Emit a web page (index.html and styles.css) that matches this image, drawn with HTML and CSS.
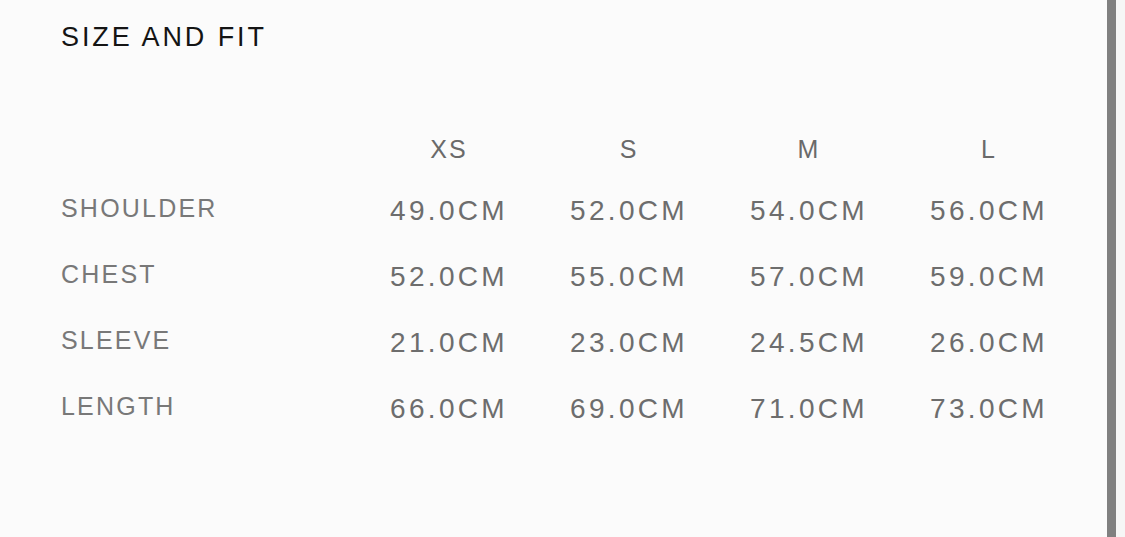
FILE: index.html
```html
<!DOCTYPE html>
<html>
<head>
<meta charset="utf-8">
<link rel="stylesheet" href="styles.css">
</head>
<body>
<div class="page">
  <main class="panel">
    <h1 class="title">SIZE AND FIT</h1>
    <div class="table">
      <div class="head blank"></div>
      <div class="head">XS</div>
      <div class="head">S</div>
      <div class="head">M</div>
      <div class="head">L</div>

      <div class="label">SHOULDER</div>
      <div class="val">49.0CM</div>
      <div class="val">52.0CM</div>
      <div class="val">54.0CM</div>
      <div class="val">56.0CM</div>

      <div class="label">CHEST</div>
      <div class="val">52.0CM</div>
      <div class="val">55.0CM</div>
      <div class="val">57.0CM</div>
      <div class="val">59.0CM</div>

      <div class="label">SLEEVE</div>
      <div class="val">21.0CM</div>
      <div class="val">23.0CM</div>
      <div class="val">24.5CM</div>
      <div class="val">26.0CM</div>

      <div class="label">LENGTH</div>
      <div class="val">66.0CM</div>
      <div class="val">69.0CM</div>
      <div class="val">71.0CM</div>
      <div class="val">73.0CM</div>
    </div>
  </main>
  <div class="scrollbar"></div>
  <div class="edge"></div>
</div>
</body>
</html>
```

FILE: styles.css
```css
html, body {
  margin: 0;
  padding: 0;
  background: #fbfbfb;
}
body {
  font-family: "Liberation Sans", Arial, sans-serif;
}
.page {
  display: flex;
  width: 1125px;
  height: 537px;
  overflow: hidden;
}
.panel {
  width: 1107px;
  padding-left: 61px;
  box-sizing: border-box;
}
.title {
  margin: 24px 0 0;
  font-size: 27px;
  line-height: 27px;
  font-weight: 400;
  letter-spacing: 2.9px;
  color: #141414;
}
.table {
  margin-top: 71px;
  display: grid;
  grid-template-columns: 298px repeat(4, 180px);
  grid-template-rows: 55px repeat(4, 66px);
  align-items: center;
}
.head {
  text-align: center;
  font-size: 25px;
  letter-spacing: 2px;
  color: #6a6a6a;
}
.label {
  font-size: 25px;
  letter-spacing: 2.2px;
  color: #787878;
  margin-top: -3px;
}
.val {
  text-align: center;
  font-size: 28px;
  letter-spacing: 3.3px;
  color: #6d6d6d;
  margin-top: 2px;
}
.scrollbar {
  width: 9px;
  background: #808080;
}
.edge {
  width: 9px;
  background: #f6f6f6;
}
```
